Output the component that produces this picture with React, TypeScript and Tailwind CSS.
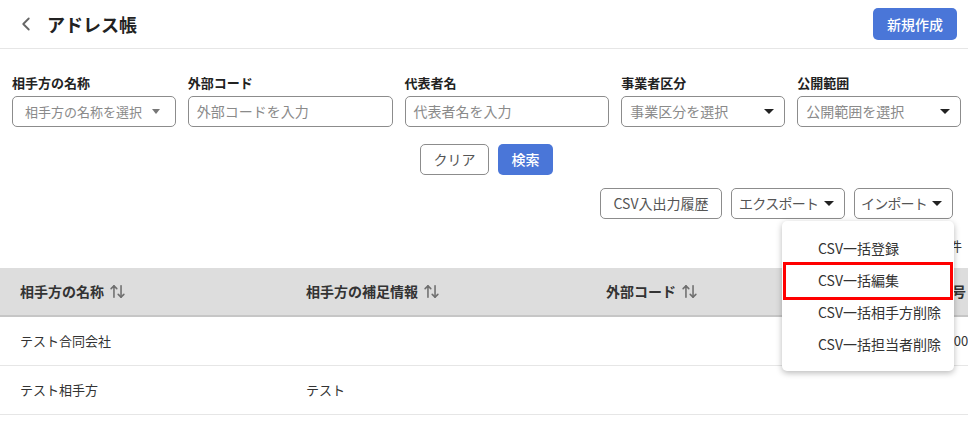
import { ChevronLeft, ArrowUpDown } from "lucide-react";

const fieldBox =
  "h-[31px] border border-[#8c8c8c] rounded-[5px] flex items-center justify-between bg-white";

function Caret({ light = false }: { light?: boolean }) {
  return light ? (
    <span className="inline-block w-0 h-0 border-x-[4px] border-x-transparent border-t-[5px] border-t-[#777]" />
  ) : (
    <span className="inline-block w-0 h-0 border-x-[5px] border-x-transparent border-t-[5px] border-t-[#222]" />
  );
}

function Field({ label, children }: { label: string; children: React.ReactNode }) {
  return (
    <div className="flex flex-col gap-1 min-w-0">
      <span className="text-[13px] font-bold leading-[18px] text-[#222]">{label}</span>
      {children}
    </div>
  );
}

function SortHead({ children }: { children: React.ReactNode }) {
  return (
    <div className="flex items-center gap-[5px] pl-5 text-[14px] font-bold text-[#333] whitespace-nowrap">
      {children}
      <ArrowUpDown size={17} strokeWidth={2.2} className="text-[#6f6f6f]" />
    </div>
  );
}

const MENU = ["CSV一括登録", "CSV一括編集", "CSV一括相手方削除", "CSV一括担当者削除"];
const cols = "grid grid-cols-[286px_300px_304px_290px]";

export default function App() {
  return (
    <div className="w-[968px] h-[427px] overflow-hidden bg-white font-['Noto_Sans_CJK_JP','Noto_Sans',sans-serif] text-[#333]">
      {/* Header */}
      <header className="h-[49px] flex items-center justify-between border-b border-[#e6e6e6] pl-[15px] pr-[11px]">
        <div className="flex items-center gap-[10px]">
          <ChevronLeft size={22} strokeWidth={2} className="text-[#666]" />
          <h1 className="text-[18px] font-bold text-[#222] leading-none">アドレス帳</h1>
        </div>
        <button className="h-8 px-[14px] rounded-[5px] bg-[#4a76d8] text-white text-[14px] font-medium">
          新規作成
        </button>
      </header>

      {/* Search form */}
      <div className="pl-3 pr-[7px] pt-[25px]">
        <div className="grid grid-cols-[4fr_5fr_5fr_4fr_4fr] gap-3">
          <Field label="相手方の名称">
            <div className={`${fieldBox} pl-3 pr-[15px]`}>
              <span className="text-[13px] text-[#8a8a8a]">相手方の名称を選択</span>
              <Caret light />
            </div>
          </Field>
          <Field label="外部コード">
            <div className={`${fieldBox} px-2`}>
              <span className="text-[14px] text-[#8a8a8a]">外部コードを入力</span>
            </div>
          </Field>
          <Field label="代表者名">
            <div className={`${fieldBox} px-2`}>
              <span className="text-[14px] text-[#8a8a8a]">代表者名を入力</span>
            </div>
          </Field>
          <Field label="事業者区分">
            <div className={`${fieldBox} pl-2 pr-[10px]`}>
              <span className="text-[14px] text-[#8a8a8a]">事業区分を選択</span>
              <Caret />
            </div>
          </Field>
          <Field label="公開範囲">
            <div className={`${fieldBox} pl-2 pr-[10px]`}>
              <span className="text-[14px] text-[#8a8a8a]">公開範囲を選択</span>
              <Caret />
            </div>
          </Field>
        </div>

        <div className="mt-[17px] flex justify-center gap-[9px]">
          <button className="h-[31px] w-[69px] rounded-[5px] border border-[#8c8c8c] text-[14px] text-[#555]">
            クリア
          </button>
          <button className="h-[31px] w-[55px] rounded-[5px] bg-[#4a76d8] text-white text-[14px] font-medium">
            検索
          </button>
        </div>
      </div>

      {/* Toolbar */}
      <div className="mt-[13px] flex justify-end gap-[9px] pr-[15px]">
        <button className="h-[31px] w-[122px] rounded-[5px] border border-[#8c8c8c] text-[14px] text-[#555]">
          CSV入出力履歴
        </button>
        <button className="h-[31px] w-[114px] rounded-[5px] border border-[#8c8c8c] flex items-center justify-between pl-[7px] pr-[10px] text-[14px] tracking-[-0.7px] text-[#555]">
          エクスポート
          <Caret />
        </button>
        <div className="relative">
          <button className="h-[31px] w-[99px] rounded-[5px] border border-[#8c8c8c] flex items-center justify-between pl-[6px] pr-[10px] text-[14px] tracking-[-0.8px] text-[#555]">
            インポート
            <Caret />
          </button>
          {/* Import dropdown */}
          <div className="absolute right-[-1px] top-[33px] z-10 w-[172px] py-[11px] bg-white rounded-[5px] shadow-[0_2px_6px_rgba(0,0,0,0.28)]">
            {MENU.map((m, i) => (
              <div key={m} className="relative h-8 flex items-center pl-9 text-[14px] text-[#333] whitespace-nowrap">
                {m}
                {i === 1 && (
                  <div className="absolute left-[1px] right-[1px] top-[-2px] bottom-[-4px] border-[3px] border-[#ff0000]" />
                )}
              </div>
            ))}
          </div>
        </div>
      </div>

      {/* Count */}
      <div className="mt-[17px] h-5 flex justify-end pr-[6px] text-[13px] leading-5 text-[#333]">
        全2件
      </div>

      {/* Table */}
      <div className="mt-3 w-[968px] overflow-hidden">
        <div className="w-[1200px]">
          <div className={`${cols} h-[49px] bg-[#dddddd] border-b-2 border-[#c6c6c6] items-center`}>
            <SortHead>相手方の名称</SortHead>
            <SortHead>相手方の補足情報</SortHead>
            <SortHead>外部コード</SortHead>
            <SortHead>登録番号</SortHead>
          </div>
          <div className={`${cols} h-[49px] border-b border-[#e6e6e6] items-center text-[13px]`}>
            <div className="pl-5">テスト合同会社</div>
            <div className="pl-5" />
            <div className="pl-5" />
            <div className="pl-5">T1000000000000</div>
          </div>
          <div className={`${cols} h-[49px] border-b border-[#e6e6e6] items-center text-[13px]`}>
            <div className="pl-5">テスト相手方</div>
            <div className="pl-5">テスト</div>
            <div className="pl-5" />
            <div className="pl-5" />
          </div>
        </div>
      </div>
    </div>
  );
}
